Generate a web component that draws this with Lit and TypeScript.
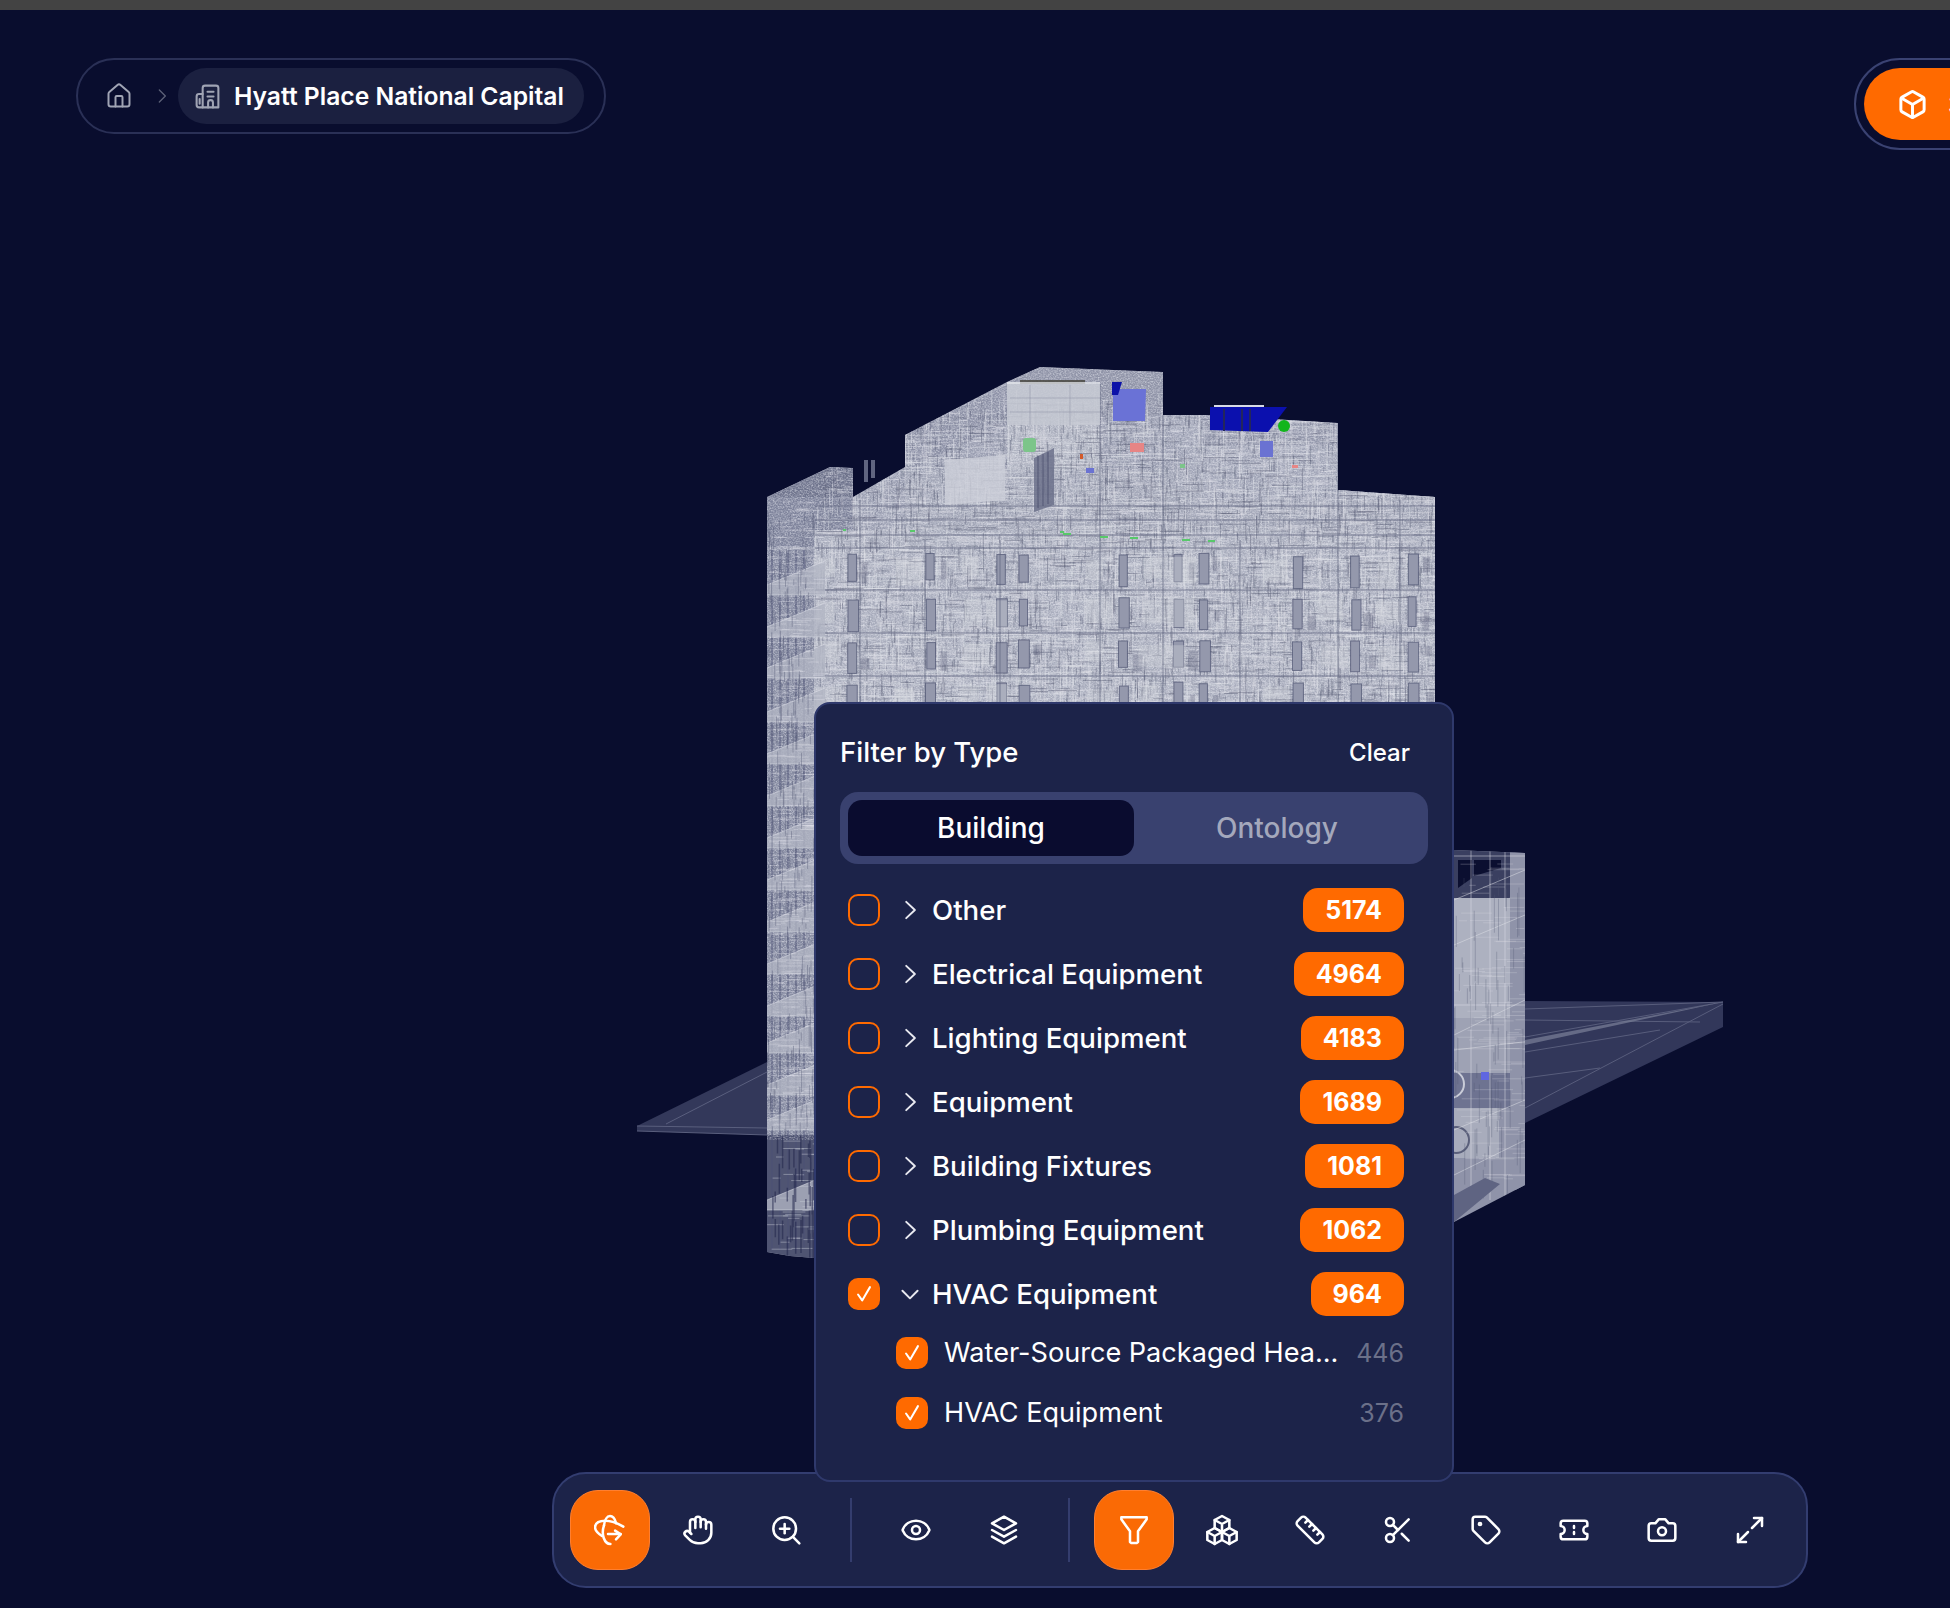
import { LitElement, html, css, svg } from "lit";
import { customElement } from "lit/decorators.js";

function rng(seed: number) {
  let s = seed;
  return () => {
    s = (s * 1664525 + 1013904223) >>> 0;
    return s / 4294967296;
  };
}

const BODY =
  "767,497 830,467 853,468 853,497 905,467 905,435 1007,382 1040,367 1163,372 1163,415 1205,415 1338,423 1338,490 1435,497 1435,720 814,720 814,1258 790,1256 767,1252";
const RIGHT = "1454,850 1525,853 1525,1185 1454,1222";

function segs(r: () => number, n: number, x0: number, x1: number, y0: number, y1: number, lenMin: number, lenMax: number, vert = false) {
  let d = "";
  for (let i = 0; i < n; i++) {
    const x = x0 + r() * (x1 - x0);
    const y = y0 + r() * (y1 - y0);
    const l = lenMin + r() * (lenMax - lenMin);
    d += vert ? `M${x.toFixed(1)} ${y.toFixed(1)}v${l.toFixed(1)}` : `M${x.toFixed(1)} ${y.toFixed(1)}h${l.toFixed(1)}`;
  }
  return d;
}

const r = rng(42);
const lightH = segs(r, 1500, 815, 1440, 420, 730, 6, 44);
const lightV = segs(r, 1500, 815, 1440, 385, 730, 6, 40, true);
const darkH = segs(r, 620, 815, 1440, 400, 730, 5, 30);
const darkV = segs(r, 520, 815, 1440, 400, 730, 5, 24, true);
const fineH = segs(r, 2600, 815, 1440, 400, 730, 3, 14);
const fineV = segs(r, 2600, 815, 1440, 400, 730, 3, 12, true);
const leftH = segs(r, 420, 767, 815, 500, 1130, 4, 26);
const leftV = segs(r, 260, 767, 815, 500, 1130, 5, 24, true);
const lowH = segs(r, 36, 767, 815, 1135, 1250, 4, 30);
const lowV = segs(r, 40, 770, 815, 1135, 1240, 8, 34, true);
const rightH = segs(r, 120, 1454, 1525, 860, 1180, 6, 40);
const rightV = segs(r, 70, 1454, 1525, 860, 1180, 8, 50, true);

type Bit = { x: number; y: number; w: number; h: number; k: number };
const bits: Bit[] = [];
const bays = [846, 925, 995, 1018, 1118, 1172, 1198, 1292, 1350, 1408];
for (let f = 0; f < 5; f++) {
  const y = 555 + f * 43;
  for (const bx of bays) {
    bits.push({ x: bx + r() * 2, y: y + r() * 4 - 2, w: 8 + r() * 3, h: 26 + r() * 6, k: 0 });
    if (r() > 0.25) bits.push({ x: bx - 34 + r() * 6, y: y + r() * 6, w: 16 + r() * 12, h: 18 + r() * 12, k: 1 });
    if (r() > 0.55) bits.push({ x: bx + 14 + r() * 6, y: y + r() * 18, w: 4 + r() * 6, h: 10 + r() * 10, k: 2 });
  }
}
const balconies = [585, 627, 668, 712, 754, 796, 838, 880, 922, 964, 1006, 1043, 1085, 1120, 1200];

function building() {
  return svg`
    <svg class="scene" width="1950" height="1608" viewBox="0 0 1950 1608" xmlns="http://www.w3.org/2000/svg">
      <defs>
        <clipPath id="bodyClip"><polygon points=${BODY}></polygon></clipPath>
        <clipPath id="rightClip"><polygon points=${RIGHT}></polygon></clipPath>
        <filter id="grain" x="0" y="0" width="100%" height="100%">
          <feTurbulence type="fractalNoise" baseFrequency="0.6 0.75" numOctaves="2" seed="7"></feTurbulence>
          <feColorMatrix type="matrix" values="0 0 0 0 0.95  0 0 0 0 0.96  0 0 0 0 1  1.9 0 0 0 -0.7"></feColorMatrix>
        </filter>
      </defs>

      <polygon points="637,1126 767,1062 767,1135 637,1131" fill="#33385a"></polygon>
      <path d="M637 1126L767 1128M666 1124L767 1072M637 1131L767 1135" stroke="#5a5f7e" stroke-width="1" fill="none"></path>
      <polygon points="1525,1001 1723,1002 1723,1027 1525,1123" fill="#32375a"></polygon>
      <path d="M1525 1009L1723 1002M1525 1020L1700 1022M1525 1037L1723 1002M1525 1052L1660 1030M1525 1078L1600 1068M1525 1108L1723 1004" stroke="#585d7c" stroke-width="1" fill="none"></path>
      <path d="M1525 1040L1723 1002L1525 1045Z" fill="#7b8098" opacity=".7"></path>

      <polygon points=${RIGHT} fill="#8f93a9"></polygon>
      <g clip-path="url(#rightClip)">
        <rect x="1454" y="850" width="60" height="48" fill="#3a3f60"></rect>
        <polygon points="1458,860 1472,860 1472,878 1458,888" fill="#0b0f30"></polygon>
        <polygon points="1474,860 1501,860 1501,868 1474,876" fill="#0b0f30"></polygon>
        <rect x="1454" y="898" width="62" height="120" fill="#adb1c0"></rect>
        <rect x="1454" y="1018" width="62" height="55" fill="#9ea2b4"></rect>
        <rect x="1454" y="1073" width="62" height="35" fill="#6e7391"></rect>
        <rect x="1454" y="1108" width="45" height="50" fill="#a8acbc"></rect>
        <circle cx="1456" cy="1140" r="13" fill="none" stroke="#5a5f7a" stroke-width="2"></circle>
        <circle cx="1450" cy="1084" r="14" fill="none" stroke="#c9ccd8" stroke-width="2"></circle>
        <rect x="1510" y="850" width="15" height="340" fill="#8f93a9"></rect>
        <path d="M1454 1005L1525 1005M1454 1050L1540 1040M1454 900L1525 870M1454 945L1525 915M1454 1035L1525 1000M1454 1130L1525 1100M1454 1175L1525 1140M1471 850V1200M1490 850V1200M1505 850V1200M1454 856L1525 856" stroke="#dfe1e8" stroke-width="1" opacity=".5" fill="none"></path>
        <path d=${rightH} stroke="#e2e4ec" stroke-width="1" opacity=".25" fill="none"></path>
        <path d=${rightV} stroke="#50556f" stroke-width="1" opacity=".3" fill="none"></path>
        <polygon points="1454,1195 1485,1178 1500,1184 1454,1222" fill="#5f6482"></polygon>
      </g>
      <rect x="1481" y="1072" width="8" height="8" fill="#5f66e0"></rect>

      <polygon points=${BODY} fill="#9b9fb2"></polygon>
      <g clip-path="url(#bodyClip)">
        <polygon points="767,497 830,467 853,468 853,497" fill="#70758e"></polygon>
        <rect x="767" y="497" width="86" height="50" fill="#7f849c"></rect>
        <rect x="767" y="550" width="47" height="590" fill="#83889f"></rect>
        <rect x="767" y="1135" width="47" height="125" fill="#4f5472"></rect>
        <rect x="814" y="530" width="640" height="200" fill="#a9adbd"></rect>
        <rect x="905" y="470" width="530" height="60" fill="#a2a6b7"></rect>
        <polygon points="1040,367 1163,372 1163,415 1100,420 1100,382 1007,382" fill="#9094a8"></polygon>
        <polygon points="1007,425 1100,425 1100,470 1007,470" fill="#aeb2c0"></polygon>
        <polygon points="1163,415 1205,415 1338,423 1338,500 1205,500" fill="#a2a6b8"></polygon>
        <polygon points="1205,422 1338,423 1338,445 1205,445" fill="#9397ab"></polygon>
        <polygon points="905,435 1007,385 1007,425 905,470" fill="#8f93a8"></polygon>
        <rect width="1950" height="1140" filter="url(#grain)" opacity=".55"></rect>
        <path d=${fineH} stroke="#eceef4" stroke-width="1" opacity=".34" fill="none"></path>
        <path d=${fineV} stroke="#5c6179" stroke-width="1" opacity=".34" fill="none"></path>
        <path d=${lightH} stroke="#dfe2ea" stroke-width="1" opacity=".42" fill="none"></path>
        <path d=${lightV} stroke="#dfe2ea" stroke-width="1" opacity=".42" fill="none"></path>
        <path d=${darkH} stroke="#4f546f" stroke-width="1" opacity=".4" fill="none"></path>
        <path d=${darkV} stroke="#4f546f" stroke-width="1" opacity=".4" fill="none"></path>
        ${bits.map((b) =>
          b.k === 0
            ? svg`<rect x=${b.x} y=${b.y} width=${b.w} height=${b.h} fill="#9498ac" stroke="#4d5270" stroke-width="1" stroke-opacity=".7"></rect>`
            : b.k === 1
              ? svg`<rect x=${b.x} y=${b.y} width=${b.w} height=${b.h} fill="#d5d8e0" opacity=".34"></rect>`
              : svg`<rect x=${b.x} y=${b.y} width=${b.w} height=${b.h} fill="#5c617c" opacity=".3"></rect>`,
        )}
        <path d="M815 548H1436M815 590H1436M815 633H1436M815 676H1436M815 719H1436M815 506H1436M815 520H1436M815 535H1436" stroke="#666b85" stroke-width="2" opacity=".42" fill="none"></path>
        <path d="M860 500V730M925 540V730M1000 540V730M1100 384V730M1163 415V730M1240 540V730M1338 423V730M1400 500V730" stroke="#5f647e" stroke-width="2" opacity=".35" fill="none"></path>
        <path d="M772 550V1250M780 550V1250M788 550V1250M796 550V1250M804 550V1250" stroke="#4c5174" stroke-width="2" opacity=".42" fill="none"></path>
        ${balconies.map(
          (y) => svg`<polygon points="767,${y} 825,${y - 24} 825,${y + 10} 767,${y + 10}" fill="#b2b6c4" opacity=".78"></polygon>
            <path d="M767 ${y}L825 ${y - 24}M767 ${y + 10}H825" stroke="#dcdee7" stroke-width="1" opacity=".55" fill="none"></path>`,
        )}
        <path d=${leftH} stroke="#e4e6ee" stroke-width="1" opacity=".35" fill="none"></path>
        <path d=${leftV} stroke="#555a75" stroke-width="1" opacity=".4" fill="none"></path>
        <path d=${lowH} stroke="#c8cbd8" stroke-width="1" opacity=".45" fill="none"></path>
        <path d=${lowV} stroke="#20244a" stroke-width="1.500" opacity=".55" fill="none"></path>
        <polygon points="1007,382 1100,384 1100,425 1007,425" fill="#c7cad3" opacity=".85"></polygon>
        <path d="M1010 398h90M1010 412h90M1030 385v40M1070 385v40" stroke="#8e92a6" stroke-width="1" opacity=".5" fill="none"></path>
        <polygon points="945,460 1005,455 1005,500 945,505" fill="#cdd0d9" opacity=".8"></polygon>
        <polygon points="1034,458 1054,448 1054,505 1034,512" fill="#6c718b" opacity=".85"></polygon>
        <path d="M1038 456v52M1043 454v52M1048 452v52" stroke="#3c4060" stroke-width="1" opacity=".6" fill="none"></path>
        <path d="M1020 382H1085" stroke="#4b4a44" stroke-width="4" opacity=".85"></path>
        <path d="M1007 383H1100" stroke="#e2e4ea" stroke-width="1.500"></path>
      </g>
      <path d="M866 460V482M873 460V478" stroke="#777c95" stroke-width="4" opacity=".8"></path>

      <polygon points="1113,389 1146,389 1145,421 1113,421" fill="#6a72d6"></polygon>
      <polygon points="1112,382 1122,382 1118,395 1112,395" fill="#0c12a8"></polygon>
      <polygon points="1210,407 1287,407 1268,432 1210,430" fill="#0b10ae"></polygon>
      <rect x="1214" y="405" width="50" height="2" fill="#d8dbe6"></rect>
      <path d="M1224 409V431M1242 409V431M1250 409V431" stroke="#23265c" stroke-width="2"></path>
      <circle cx="1284" cy="426" r="6" fill="#12b51c"></circle>
      <rect x="1130" y="443" width="14" height="9" fill="#e78585"></rect>
      <rect x="1023" y="438" width="13" height="14" rx="3" fill="#7cc58a"></rect>
      <rect x="1260" y="441" width="13" height="16" fill="#6a72d2"></rect>
      <rect x="1080" y="454" width="3" height="5" fill="#d35a2a"></rect>
      <rect x="1086" y="468" width="8" height="5" fill="#6a72d2"></rect>
      <rect x="1180" y="464" width="5" height="4" fill="#7cc58a"></rect>
      <rect x="1292" y="465" width="6" height="3" fill="#e78585"></rect>
      <path d="M1063 534h8M1100 537h8M1130 538h8M1182 540h8M1208 541h7M843 530h3M910 531h5M1060 532h4" stroke="#58c86a" stroke-width="2"></path>
    </svg>
  `;
}

const i = {
  home: svg`<path d="M15 21v-8a1 1 0 0 0-1-1h-4a1 1 0 0 0-1 1v8"/><path d="M3 10a2 2 0 0 1 .709-1.528l7-5.999a2 2 0 0 1 2.582 0l7 5.999A2 2 0 0 1 21 10v9a2 2 0 0 1-2 2H5a2 2 0 0 1-2-2z"/>`,
  sep: svg`<path d="m8 3 9 9-9 9"/>`,
  chevron: svg`<path d="m8.500 4.500 8 7.500-8 7.500"/>`,
  down: svg`<path d="m5 9 7 7 7-7"/>`,
  hotel: svg`<path d="M8 21V5a2 2 0 0 1 2-2h9a2 2 0 0 1 2 2v16z"/><path d="M8 10H5a2 2 0 0 0-2 2v7a2 2 0 0 0 2 2h3"/><path d="M12 8h5M12 12h5"/><path d="M12.500 21v-4a2 2 0 0 1 4 0v4"/><path d="M5.500 14v4"/>`,
  orbit: svg`<path d="M7.500 8.500C8 4.500 9.800 1.500 12 1.500c2.200 0 3.800 2.400 4.600 5.500"/><path d="M22 9.500C18 7 13 5 8.500 5C4 5 1 6.800.8 9.800c-.2 2.700 2.500 5 5.200 6.700"/><path d="M7.500 8.500C6.300 12 6.300 15 7.300 18c1 2.800 3 4.500 5 4.500"/><path d="M10.500 15H20"/><path d="M15.800 12.500 20 15.300l-3.500 3.700"/>`,
  hand: svg`<path d="M18 11V6a2 2 0 0 0-2-2a2 2 0 0 0-2 2"/><path d="M14 10V4a2 2 0 0 0-2-2a2 2 0 0 0-2 2v2"/><path d="M10 10.500V6a2 2 0 0 0-2-2a2 2 0 0 0-2 2v8"/><path d="M18 8a2 2 0 1 1 4 0v6a8 8 0 0 1-8 8h-2c-2.800 0-4.500-.86-5.990-2.340l-3.600-3.600a2 2 0 0 1 2.830-2.820L7 15"/>`,
  zoom: svg`<circle cx="11" cy="11" r="8.500"/><path d="m22 22-4.800-4.800"/><path d="M11 7.500v7"/><path d="M7.500 11h7"/>`,
  eye: svg`<path d="M2.062 12.348a1 1 0 0 1 0-.696 10.750 10.750 0 0 1 19.876 0 1 1 0 0 1 0 .696 10.750 10.750 0 0 1-19.876 0"/><circle cx="12" cy="12" r="3"/>`,
  layers: svg`<path d="M12 2 3 7l9 5 9-5z"/><path d="m3 12 9 5 9-5"/><path d="m3 17 9 5 9-5"/>`,
  filter: svg`<path d="M2.500 2.500h19v1.500L15 13v8l-1 .8h-4l-1-.8v-8L2.500 4z"/>`,
  cubes: svg`<path d="M12 1.500l5.500 3v6l-5.500 3-5.500-3v-6z"/><path d="M6.500 4.500 12 7.500l5.500-3M12 7.500v6"/><path d="M6.500 10.500l5.500 3v6l-5.500 3-5.500-3v-6z"/><path d="M1 13.500 6.500 16.500 12 13.500M6.500 16.500v6"/><path d="M17.500 10.500l5.500 3v6l-5.500 3-5.500-3v-6z"/><path d="M12 13.500 17.500 16.500 23 13.500M17.500 16.500v6"/>`,
  ruler: svg`<path d="M21.300 15.300a2.400 2.400 0 0 1 0 3.400l-2.600 2.600a2.400 2.400 0 0 1-3.400 0L2.700 8.700a2.410 2.410 0 0 1 0-3.400l2.600-2.600a2.410 2.410 0 0 1 3.400 0Z"/><path d="m14.500 12.500 2-2"/><path d="m11.500 9.500 2-2"/><path d="m8.500 6.500 2-2"/><path d="m17.500 15.500 2-2"/>`,
  scissors: svg`<circle cx="6" cy="6" r="3"/><path d="M8.120 8.120 12 12"/><path d="M20 4 8.120 15.880"/><circle cx="6" cy="18" r="3"/><path d="M14.800 14.800 20 20"/>`,
  tag: svg`<path d="M12.586 2.586A2 2 0 0 0 11.172 2H4a2 2 0 0 0-2 2v7.172a2 2 0 0 0 .586 1.414l8.704 8.704a2.426 2.426 0 0 0 3.420 0l6.580-6.580a2.426 2.426 0 0 0 0-3.420z"/><circle cx="7.500" cy="7.500" r=".8"/>`,
  ticket: svg`<path d="M2 9a3 3 0 0 1 0 6v2a2 2 0 0 0 2 2h16a2 2 0 0 0 2-2v-2a3 3 0 0 1 0-6V7a2 2 0 0 0-2-2H4a2 2 0 0 0-2 2Z"/><path d="M12 9v1.500"/><path d="M12 13.500V15"/>`,
  camera: svg`<path d="M14.500 4h-5L7 7H4a2 2 0 0 0-2 2v9a2 2 0 0 0 2 2h16a2 2 0 0 0 2-2V9a2 2 0 0 0-2-2h-3l-2.500-3z"/><circle cx="12" cy="13" r="3"/>`,
  expand: svg`<path d="m21 3-7.500 7.500"/><path d="m3 21 7.500-7.500"/><path d="M15 3h6v6"/><path d="M3 15v6h6"/>`,
  box: svg`<path d="M21 8a2 2 0 0 0-1-1.730l-7-4a2 2 0 0 0-2 0l-7 4A2 2 0 0 0 3 8v8a2 2 0 0 0 1 1.730l7 4a2 2 0 0 0 2 0l7-4A2 2 0 0 0 21 16Z"/><path d="m3.300 7 8.700 5 8.700-5"/><path d="M12 22V12"/>`,
  check: svg`<path d="M5.500 12.500 10 19 18.500 4.500"/>`,
};

function icon(body: unknown, cls = "ic") {
  return html`<svg class=${cls} viewBox="0 0 24 24" fill="none" stroke="currentColor" stroke-linecap="round" stroke-linejoin="round">${body}</svg>`;
}

const rows = [
  ["Other", "5174"],
  ["Electrical Equipment", "4964"],
  ["Lighting Equipment", "4183"],
  ["Equipment", "1689"],
  ["Building Fixtures", "1081"],
  ["Plumbing Equipment", "1062"],
];

@customElement("app-root")
export class AppRoot extends LitElement {
  static styles = css`
    :host {
      display: block;
      position: relative;
      width: 1950px;
      height: 1608px;
      overflow: hidden;
      background: #090d2e;
      font-family: Inter, "Liberation Sans", sans-serif;
      color: #fff;
    }
    .topbar { height: 10px; background: #434343; }
    .scene { position: absolute; left: 0; top: 0; filter: blur(0.45px); }

    .crumbs {
      position: absolute; left: 76px; top: 58px; box-sizing: border-box;
      height: 76px; width: 530px; padding: 8px 20px 8px 27px;
      display: flex; align-items: center;
      border: 2px solid #2a3056; border-radius: 38px;
    }
    .crumb-home { width: 28px; height: 28px; color: #a0a4b4; stroke-width: 1.700; flex: none; }
    .crumb-sep { width: 16px; height: 16px; color: #5c6178; stroke-width: 2; margin: 0 8px 0 21px; flex: none; }
    .crumb-cur {
      height: 56px; flex: 1; box-sizing: border-box; padding: 0 15px 0 15px; border-radius: 28px;
      background: #1b2040; display: flex; align-items: center; gap: 12px;
      font-size: 24.650px; font-weight: 600; white-space: nowrap;
    }
    .crumb-bld { width: 29px; height: 29px; color: #a0a4b4; stroke-width: 1.700; flex: none; }

    .view3d {
      position: absolute; left: 1854px; top: 58px; box-sizing: border-box;
      width: 200px; height: 92px; padding: 8px; border: 2px solid #3a4272; border-radius: 46px;
    }
    .view3d-in {
      height: 72px; border-radius: 36px; background: #ff6a00; display: flex; align-items: center;
      padding-left: 33px; gap: 20px; font-size: 26px; font-weight: 600;
    }
    .view3d-ic { width: 31px; height: 31px; stroke-width: 2.300; flex: none; }

    .panel {
      position: absolute; z-index: 2; left: 814px; top: 702px; box-sizing: border-box;
      width: 640px; height: 780px; padding: 24px 24px 0 24px;
      background: #1c2349; border: 2px solid #2f396c; border-radius: 16px;
    }
    .head { display: flex; align-items: center; justify-content: space-between; height: 48px; padding-right: 18px; }
    .title { font-size: 27.500px; font-weight: 500; }
    .clear { font-size: 24px; font-weight: 500; }
    .tabs {
      margin-top: 16px; height: 72px; box-sizing: border-box; padding: 8px; border-radius: 18px; background: #39416f;
      display: grid; grid-template-columns: 286px 1fr; font-size: 28px; font-weight: 500;
    }
    .tab { display: flex; align-items: center; justify-content: center; color: #a4a8bc; border-radius: 14px; }
    .tab.on { background: #0a0c2f; color: #fff; }

    .list { margin-top: 14px; display: flex; flex-direction: column; padding: 0 24px 0 8px; }
    .row { height: 64px; display: flex; align-items: center; font-size: 27.600px; font-weight: 500; }
    .cb {
      width: 32px; height: 32px; box-sizing: border-box; flex: none; border-radius: 10px;
      border: 2px solid #ff6a00; display: flex; align-items: center; justify-content: center;
    }
    .cb.on { background: #ff6a00; }
    .tick { width: 22px; height: 22px; stroke-width: 2.200; color: #fff; }
    .chev { width: 26px; height: 26px; stroke-width: 1.800; color: #e8e9f0; margin: 0 9px 0 17px; flex: none; }
    .name { flex: 1; white-space: nowrap; }
    .badge {
      height: 44px; padding: 0 22px; border-radius: 15px; background: #ff6a00;
      display: flex; align-items: center; font-size: 25px; font-weight: 700;
    }
    .kids { display: flex; flex-direction: column; padding-left: 48px; margin-top: -3.500px; }
    .kid { height: 60px; display: flex; align-items: center; font-size: 27.100px; font-weight: 400; }
    .kid .name { margin-left: 16px; width: 0; }
    .n { color: #6b7089; font-size: 25px; flex: none; }

    .toolbar {
      position: absolute; z-index: 1; left: 552px; top: 1472px; box-sizing: border-box;
      width: 1256px; height: 116px; padding: 16px; display: flex; align-items: center; gap: 8px;
      background: #1c2349; border: 2px solid #333d70; border-radius: 34px;
    }
    .btn { width: 80px; height: 80px; border-radius: 28px; display: flex; align-items: center; justify-content: center; flex: none; color: #fff; box-sizing: border-box; }
    .btn.on { background: #fa6a05; border: 1px solid #ff7f30; }
    .btn .ic { width: 32px; height: 32px; stroke-width: 1.900; }
    .sep { width: 2px; height: 64px; background: #343d6e; margin: 0 16px; flex: none; }
  `;

  render() {
    const tool = (b: unknown, on = false) =>
      html`<div class="btn ${on ? "on" : ""}">${icon(b)}</div>`;
    return html`
      <div class="topbar"></div>
      ${building()}

      <nav class="crumbs">
        ${icon(i.home, "crumb-home")}
        ${icon(i.sep, "crumb-sep")}
        <div class="crumb-cur">${icon(i.hotel, "crumb-bld")}<span>Hyatt Place National Capital</span></div>
      </nav>

      <div class="view3d"><div class="view3d-in">${icon(i.box, "view3d-ic")}<span>3D</span></div></div>

      <section class="panel">
        <div class="head"><span class="title">Filter by Type</span><span class="clear">Clear</span></div>
        <div class="tabs"><div class="tab on">Building</div><div class="tab">Ontology</div></div>
        <div class="list">
          ${rows.map(
            ([n, c]) => html`<div class="row">
              <span class="cb"></span>${icon(i.chevron, "chev")}<span class="name">${n}</span><span class="badge">${c}</span>
            </div>`,
          )}
          <div class="row">
            <span class="cb on">${icon(i.check, "tick")}</span>${icon(i.down, "chev")}<span class="name">HVAC Equipment</span><span class="badge">964</span>
          </div>
          <div class="kids">
            <div class="kid"><span class="cb on">${icon(i.check, "tick")}</span><span class="name">Water-Source Packaged Hea...</span><span class="n">446</span></div>
            <div class="kid"><span class="cb on">${icon(i.check, "tick")}</span><span class="name">HVAC Equipment</span><span class="n">376</span></div>
          </div>
        </div>
      </section>

      <div class="toolbar">
        ${tool(i.orbit, true)}${tool(i.hand)}${tool(i.zoom)}
        <div class="sep"></div>
        ${tool(i.eye)}${tool(i.layers)}
        <div class="sep"></div>
        ${tool(i.filter, true)}${tool(i.cubes)}${tool(i.ruler)}${tool(i.scissors)}${tool(i.tag)}${tool(i.ticket)}${tool(i.camera)}${tool(i.expand)}
      </div>
    `;
  }
}
